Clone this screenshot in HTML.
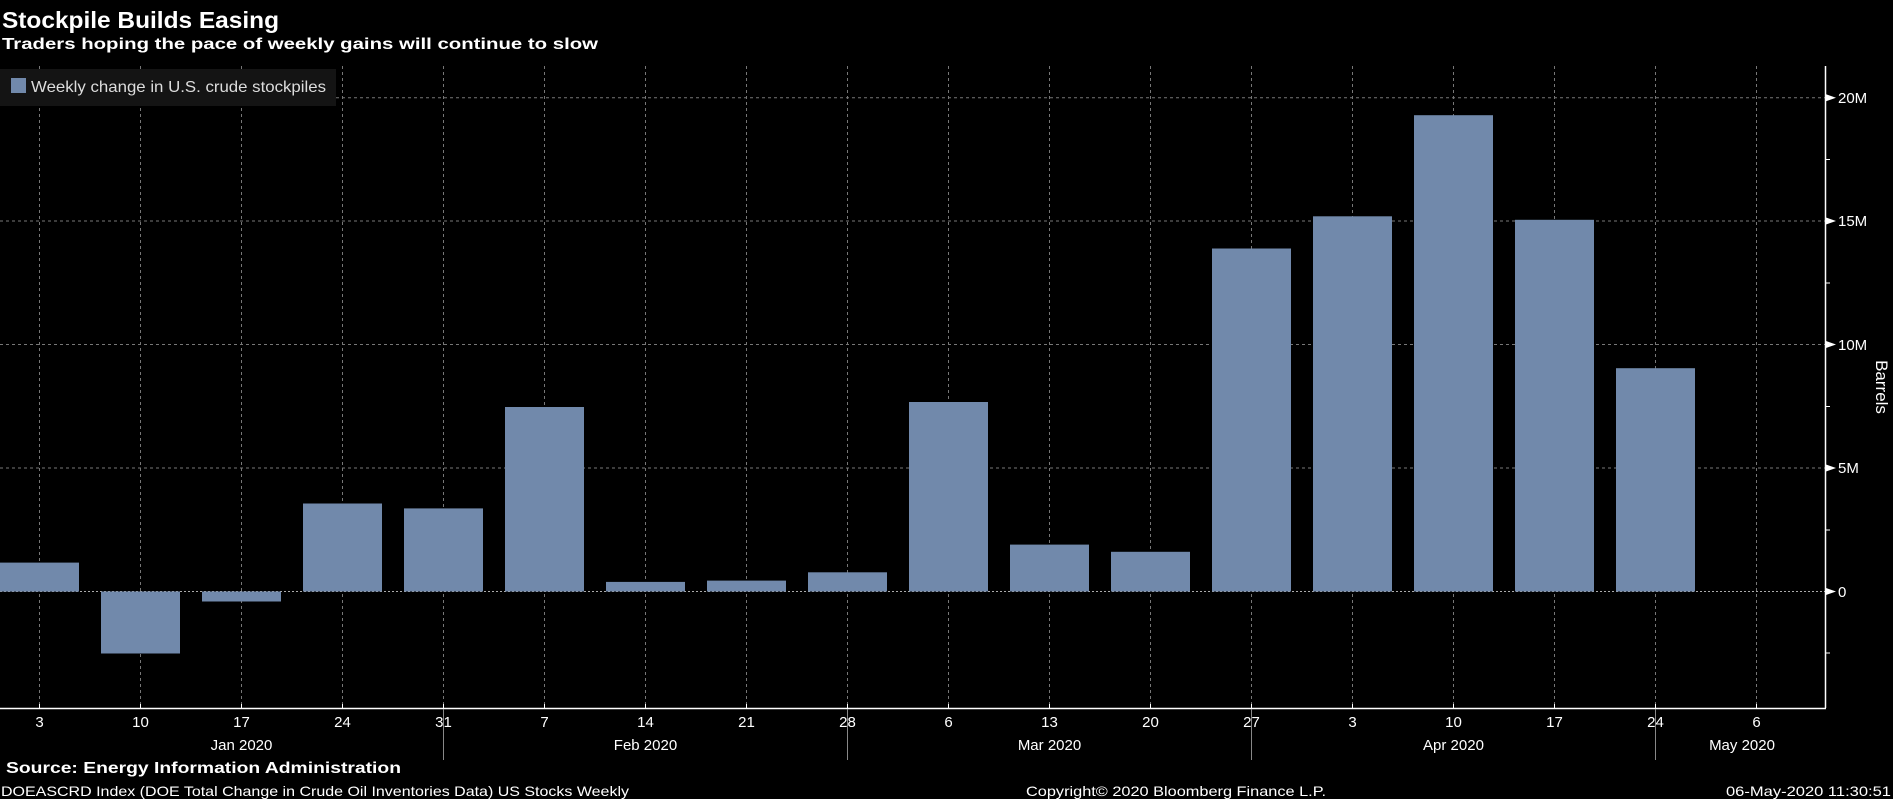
<!DOCTYPE html>
<html><head><meta charset="utf-8"><style>
html,body{margin:0;padding:0;background:#000;width:1893px;height:799px;overflow:hidden}
svg{display:block}
text{font-family:"Liberation Sans",sans-serif;fill:#fff}
</style></head><body>
<svg width="1893" height="799" viewBox="0 0 1893 799" xmlns="http://www.w3.org/2000/svg">
<rect width="1893" height="799" fill="#000"/>
<text x="2" y="28" font-size="23" font-weight="bold" textLength="277" lengthAdjust="spacingAndGlyphs">Stockpile Builds Easing</text>
<text x="2" y="49" font-size="16" font-weight="bold" textLength="596" lengthAdjust="spacingAndGlyphs">Traders hoping the pace of weekly gains will continue to slow</text>
<g stroke="#777" stroke-width="1" stroke-dasharray="3,3">
<line x1="0" y1="97.8" x2="1825" y2="97.8"/>
<line x1="0" y1="221" x2="1825" y2="221"/>
<line x1="0" y1="344.5" x2="1825" y2="344.5"/>
<line x1="0" y1="468" x2="1825" y2="468"/>
<line x1="0" y1="591.5" x2="1825" y2="591.5" stroke="#aaa" stroke-dasharray="2,2"/>
<g id="vg"></g>
</g>
<g stroke="#777" stroke-dasharray="3,3">
<line x1="39.5" y1="66" x2="39.5" y2="708"/><line x1="140.5" y1="66" x2="140.5" y2="708"/><line x1="241.5" y1="66" x2="241.5" y2="708"/><line x1="342.5" y1="66" x2="342.5" y2="708"/><line x1="443.5" y1="66" x2="443.5" y2="708"/><line x1="544.5" y1="66" x2="544.5" y2="708"/><line x1="645.5" y1="66" x2="645.5" y2="708"/><line x1="746.5" y1="66" x2="746.5" y2="708"/><line x1="847.5" y1="66" x2="847.5" y2="708"/><line x1="948.5" y1="66" x2="948.5" y2="708"/><line x1="1049.5" y1="66" x2="1049.5" y2="708"/><line x1="1150.5" y1="66" x2="1150.5" y2="708"/><line x1="1251.5" y1="66" x2="1251.5" y2="708"/><line x1="1352.5" y1="66" x2="1352.5" y2="708"/><line x1="1453.5" y1="66" x2="1453.5" y2="708"/><line x1="1554.5" y1="66" x2="1554.5" y2="708"/><line x1="1655.5" y1="66" x2="1655.5" y2="708"/><line x1="1756.5" y1="66" x2="1756.5" y2="708"/>
</g>
<rect x="0" y="69" width="336" height="37" fill="#141414"/>
<rect x="11" y="78" width="15" height="15" fill="#7189ab"/>
<text x="31" y="92" font-size="16" fill="#ddd" textLength="295" lengthAdjust="spacingAndGlyphs" style="fill:#ddd">Weekly change in U.S. crude stockpiles</text>
<g fill="#7189ab">
<rect x="0" y="562.6" width="79" height="29"/>
<rect x="101" y="591.5" width="79" height="62"/>
<rect x="202" y="591.5" width="79" height="10"/>
<rect x="303" y="503.5" width="79" height="88"/>
<rect x="404" y="508.4" width="79" height="83.1"/>
<rect x="505" y="407" width="79" height="184.5"/>
<rect x="606" y="581.9" width="79" height="9.6"/>
<rect x="707" y="580.6" width="79" height="10.9"/>
<rect x="808" y="572.3" width="79" height="19.2"/>
<rect x="909" y="402" width="79" height="189.5"/>
<rect x="1010" y="544.6" width="79" height="46.9"/>
<rect x="1111" y="551.8" width="79" height="39.7"/>
<rect x="1212" y="248.5" width="79" height="343"/>
<rect x="1313" y="216.3" width="79" height="375.2"/>
<rect x="1414" y="115.2" width="79" height="476.3"/>
<rect x="1515" y="219.8" width="79" height="371.7"/>
<rect x="1616" y="368.2" width="79" height="223.3"/>
</g>
<line x1="1825.5" y1="66" x2="1825.5" y2="708" stroke="#fff" stroke-width="1.5"/>
<line x1="0" y1="708.5" x2="1826" y2="708.5" stroke="#fff" stroke-width="1.5"/>
<g stroke="#fff">
<line x1="1826" y1="159.5" x2="1830" y2="159.5"/><line x1="1826" y1="283" x2="1830" y2="283"/><line x1="1826" y1="406.5" x2="1830" y2="406.5"/><line x1="1826" y1="530" x2="1830" y2="530"/><line x1="1826" y1="653" x2="1830" y2="653"/>
</g>
<g fill="#fff">
<path d="M1826 94.3 L1836 97.8 L1826 101.3Z"/><path d="M1826 217.5 L1836 221 L1826 224.5Z"/><path d="M1826 341 L1836 344.5 L1826 348Z"/><path d="M1826 464.5 L1836 468 L1826 471.5Z"/><path d="M1826 588 L1836 591.5 L1826 595Z"/>
</g>
<g font-size="15">
<text x="1838" y="103">20M</text><text x="1838" y="226">15M</text><text x="1838" y="350">10M</text><text x="1838" y="473">5M</text><text x="1838" y="597">0</text>
</g>
<text transform="translate(1876,387) rotate(90)" font-size="17" text-anchor="middle">Barrels</text>
<g stroke="#fff">
<line x1="39.5" y1="704" x2="39.5" y2="708"/><line x1="140.5" y1="704" x2="140.5" y2="708"/><line x1="241.5" y1="704" x2="241.5" y2="708"/><line x1="342.5" y1="704" x2="342.5" y2="708"/><line x1="443.5" y1="704" x2="443.5" y2="708"/><line x1="544.5" y1="704" x2="544.5" y2="708"/><line x1="645.5" y1="704" x2="645.5" y2="708"/><line x1="746.5" y1="704" x2="746.5" y2="708"/><line x1="847.5" y1="704" x2="847.5" y2="708"/><line x1="948.5" y1="704" x2="948.5" y2="708"/><line x1="1049.5" y1="704" x2="1049.5" y2="708"/><line x1="1150.5" y1="704" x2="1150.5" y2="708"/><line x1="1251.5" y1="704" x2="1251.5" y2="708"/><line x1="1352.5" y1="704" x2="1352.5" y2="708"/><line x1="1453.5" y1="704" x2="1453.5" y2="708"/><line x1="1554.5" y1="704" x2="1554.5" y2="708"/><line x1="1655.5" y1="704" x2="1655.5" y2="708"/><line x1="1756.5" y1="704" x2="1756.5" y2="708"/>
</g>
<g stroke="#888">
<line x1="443.5" y1="709" x2="443.5" y2="760"/><line x1="847.5" y1="709" x2="847.5" y2="760"/><line x1="1251.5" y1="709" x2="1251.5" y2="760"/><line x1="1655.5" y1="709" x2="1655.5" y2="760"/>
</g>
<g font-size="15" text-anchor="middle">
<text x="39.5" y="727">3</text><text x="140.5" y="727">10</text><text x="241.5" y="727">17</text><text x="342.5" y="727">24</text><text x="443.5" y="727">31</text><text x="544.5" y="727">7</text><text x="645.5" y="727">14</text><text x="746.5" y="727">21</text><text x="847.5" y="727">28</text><text x="948.5" y="727">6</text><text x="1049.5" y="727">13</text><text x="1150.5" y="727">20</text><text x="1251.5" y="727">27</text><text x="1352.5" y="727">3</text><text x="1453.5" y="727">10</text><text x="1554.5" y="727">17</text><text x="1655.5" y="727">24</text><text x="1756.5" y="727">6</text>
<text x="241.5" y="750">Jan 2020</text><text x="645.5" y="750">Feb 2020</text><text x="1049.5" y="750">Mar 2020</text><text x="1453.5" y="750">Apr 2020</text><text x="1742" y="750">May 2020</text>
</g>
<text x="6" y="773" font-size="16" font-weight="bold" textLength="395" lengthAdjust="spacingAndGlyphs">Source: Energy Information Administration</text>
<g font-size="14">
<text x="1" y="796" textLength="628" lengthAdjust="spacingAndGlyphs">DOEASCRD Index (DOE Total Change in Crude Oil Inventories Data) US Stocks Weekly</text>
<text x="1026" y="796" textLength="300" lengthAdjust="spacingAndGlyphs">Copyright© 2020 Bloomberg Finance L.P.</text>
<text x="1726" y="796" textLength="165" lengthAdjust="spacingAndGlyphs">06-May-2020 11:30:51</text>
</g>
</svg>
</body></html>
